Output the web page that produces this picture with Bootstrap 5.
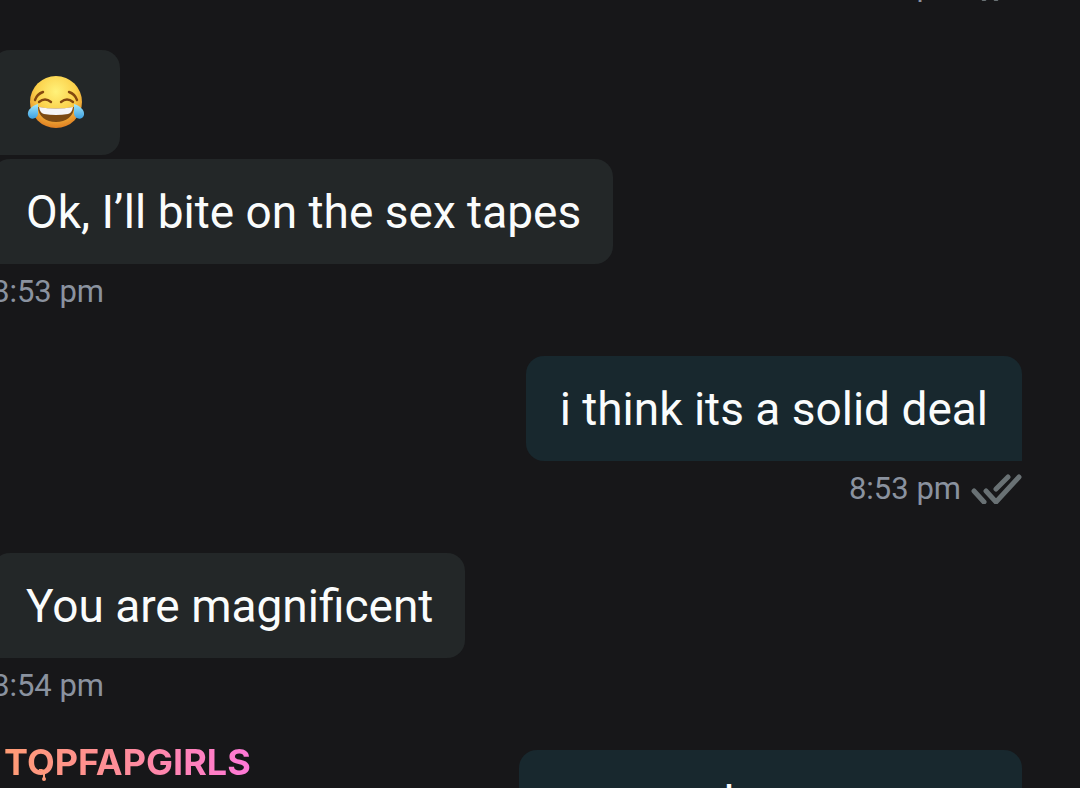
<!DOCTYPE html>
<html lang="en">
<head>
<meta charset="utf-8">
<meta name="viewport" content="width=device-width, initial-scale=1">
<title>Chat</title>
<link href="https://cdn.jsdelivr.net/npm/bootstrap@5.3.0/dist/css/bootstrap.min.css" rel="stylesheet">
<style>
  body { background: #171719; color: #fafcfc; font-family: Roboto, "Liberation Sans", sans-serif; }
  .chat { gap: 36px; margin-top: -42px; margin-left: -8px; padding-right: 58px; }
  .bubble { padding: 19px 34px 18px; font-size: 46px; line-height: 68px; border-radius: 18px; background: #232728; white-space: nowrap; }
  .incoming .bubble { padding-right: 32px; border-bottom-left-radius: 0; }
  .outgoing .bubble { background: #18282e; border-bottom-right-radius: 0; }
  .stack { gap: 4px; }
  .meta { height: 56px; font-size: 31px; line-height: 56px; color: #8a929f; gap: 10px; }
  .ticks { width: 51px; height: 30px; }
  .emoji { width: 62px; height: 68px; }
  .brand-mark { left: 4px; bottom: 4px; color: #ff9a78; }
  .brand-name { font: 700 36px/44px Inter, "Liberation Sans", sans-serif; background: linear-gradient(90deg, #ff9c74, #ff8c9c 50%, #ff78d8); -webkit-background-clip: text; background-clip: text; color: transparent; }
  .drip { left: 35px; bottom: 1px; width: 10px; height: 14px; }
</style>
</head>
<body>
<svg class="d-none" aria-hidden="true">
  <symbol id="ticks" viewBox="0 0 51 30">
    <path d="M3 17 13 28M15 17 25 28 48 3M25 15 37 3" fill="none" stroke="#697174" stroke-width="5" stroke-linecap="round" stroke-linejoin="miter"/>
  </symbol>
</svg>
<div class="vh-100 overflow-hidden position-relative">
  <main class="chat d-flex flex-column">
    <div class="outgoing d-flex flex-column align-items-end">
      <div class="meta d-flex align-items-center"><time>8:52 pm</time><svg class="ticks"><use href="#ticks"/></svg></div>
    </div>
    <div class="incoming stack d-flex flex-column align-items-start">
      <div class="bubble"><svg class="emoji d-block" viewBox="-1 -6 62 68" role="img" aria-label="Face with tears of joy">
        <defs>
          <radialGradient id="face" cx=".5" cy=".3" r=".7"><stop offset="0" stop-color="#fff27a"/><stop offset=".55" stop-color="#fbd04a"/><stop offset="1" stop-color="#e07f22"/></radialGradient>
          <linearGradient id="tear" x2="0" y2="1"><stop offset="0" stop-color="#a5e8fa"/><stop offset="1" stop-color="#3ba0e2"/></linearGradient>
        </defs>
        <circle cx="29" cy="27" r="26" fill="url(#face)"/>
        <path d="M11 32q18 3 36 0c0 9-8 15-18 15s-18-6-18-15z" fill="#7c4a13"/>
        <path d="M12 32q17 3 34 0-1 6-5 7-12 2-24 0-4-1-5-7z" fill="#f5f5f7"/>
        <path d="M12 27q6-5 12 0M34 27q6-5 12 0M8 25q2-6 8-8M42 17q6 2 8 8" fill="none" stroke="#83480f" stroke-width="2.4" stroke-linecap="round"/>
        <path d="M11 29C5 31 0 35 1 40c1 5 9 5 10-1zM47 29c6 2 11 6 10 11-1 5-9 5-10-1z" fill="url(#tear)"/>
      </svg></div>
      <div class="d-flex flex-column align-items-start">
        <div class="bubble">Ok, I’ll bite on the sex tapes</div>
        <div class="meta d-flex align-items-center"><time>8:53 pm</time></div>
      </div>
    </div>
    <div class="outgoing d-flex flex-column align-items-end">
      <div class="bubble">i think its a solid deal</div>
      <div class="meta d-flex align-items-center"><time>8:53 pm</time><svg class="ticks"><use href="#ticks"/></svg></div>
    </div>
    <div class="incoming d-flex flex-column align-items-start">
      <div class="bubble">You are magnificent</div>
      <div class="meta d-flex align-items-center"><time>8:54 pm</time></div>
    </div>
    <div class="outgoing d-flex flex-column align-items-end">
      <div class="bubble">you can have a room.</div>
    </div>
  </main>
  <div class="brand-mark position-absolute">
    <span class="brand-name d-block">TOPFAPGIRLS</span>
    <svg class="drip position-absolute" viewBox="0 0 10 14" aria-hidden="true"><path d="M0 0 5 2v7" fill="none" stroke="currentColor" stroke-width="2"/><circle cx="5" cy="10" r="2" fill="currentColor"/></svg>
  </div>
</div>
<script src="https://cdn.jsdelivr.net/npm/bootstrap@5.3.0/dist/js/bootstrap.bundle.min.js"></script>
</body>
</html>
